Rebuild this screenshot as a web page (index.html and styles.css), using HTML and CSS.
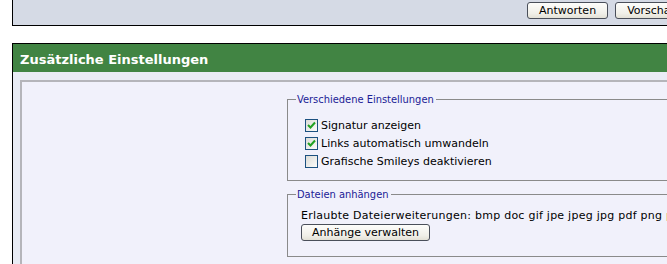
FILE: index.html
```html
<!DOCTYPE html>
<html>
<head>
<meta charset="utf-8">
<link rel="stylesheet" href="styles.css">
</head>
<body>
<div class="page">
  <div class="topbox">
    <button class="btn">Antworten</button>
    <button class="btn">Vorschau</button>
  </div>
  <div class="section">
    <div class="sec-head">Zusätzliche Einstellungen</div>
    <div class="sec-body">
      <div class="inner">
        <div class="left-col"></div>
        <div class="right-col">
          <fieldset class="fs fs1">
            <legend>Verschiedene Einstellungen</legend>
            <label class="cb-row"><span class="cb checked"><svg viewBox="0 0 11 11" width="11" height="11"><path d="M2 5 L4.5 7.5 L9 2.5" fill="none" stroke="#21a121" stroke-width="2"/></svg></span>Signatur anzeigen</label>
            <label class="cb-row"><span class="cb checked"><svg viewBox="0 0 11 11" width="11" height="11"><path d="M2 5 L4.5 7.5 L9 2.5" fill="none" stroke="#21a121" stroke-width="2"/></svg></span>Links automatisch umwandeln</label>
            <label class="cb-row"><span class="cb"></span>Grafische Smileys deaktivieren</label>
          </fieldset>
          <fieldset class="fs fs2">
            <legend>Dateien anhängen</legend>
            <div class="ext">Erlaubte Dateierweiterungen: bmp doc gif jpe jpeg jpg pdf png psd txt zip</div>
            <button class="btn btn-att">Anhänge verwalten</button>
          </fieldset>
        </div>
      </div>
    </div>
  </div>
</div>
</body>
</html>
```
FILE: styles.css
```css
html, body {
  margin: 0;
  padding: 0;
  background: #ffffff;
  overflow: hidden;
}
.page {
  width: 900px;
  padding-left: 12px;
  font-family: "DejaVu Sans", Verdana, sans-serif;
  font-size: 11px;
  color: #000;
}
.topbox {
  background: #d5dae5;
  border-left: 1px solid #000;
  border-bottom: 1px solid #000;
  display: flex;
  align-items: flex-start;
  padding-top: 2px;
  padding-left: 514px;
  gap: 7px;
  box-sizing: content-box;
  height: 23px;
}
.btn {
  font-family: "DejaVu Sans", Verdana, sans-serif;
  font-size: 11px;
  height: 17px;
  padding: 0 11px;
  border: 1px solid #4a4f5a;
  border-radius: 3px;
  background: linear-gradient(#fdfdfb, #f0efe8 70%, #e3e1d6);
  color: #000;
  line-height: 15px;
}
.section {
  margin-top: 17px;
  border-top: 1px solid #000;
  border-left: 1px solid #000;
}
.sec-head {
  height: 28px;
  box-sizing: border-box;
  background: #418443;
  color: #fff;
  font-weight: bold;
  font-size: 13px;
  line-height: 16px;
  padding-top: 8px;
  padding-left: 7px;
}
.sec-body {
  background: #e9ecf5;
  padding: 8px 0 0 7px;
}
.inner {
  border-top: 2px solid #b5b5ba;
  border-left: 2px solid #b5b5ba;
  background: #f1f1fb;
  display: grid;
  grid-template-columns: 265px 1fr;
  padding-top: 11px;
  padding-bottom: 20px;
}
.fs {
  margin: 0;
  border: 1px solid #8a8a8a;
  border-right: none;
  padding: 4px 0 8px 10px;
}
.fs legend {
  font-family: "DejaVu Sans Condensed", "DejaVu Sans", sans-serif;
  font-size: 11px;
  color: #1b2196;
  padding: 0 2px 0 1px;
  margin-left: -2px;
}
.fs1 {
  padding-top: 10px;
  padding-bottom: 10px;
}
.fs2 {
  margin-top: 7px;
  padding-top: 6px;
  padding-bottom: 15px;
}
.cb-row {
  display: flex;
  align-items: center;
  height: 18px;
  gap: 3px;
  margin-left: 7px;
}
.cb {
  width: 11px;
  height: 11px;
  border: 1px solid #1c5180;
  background: linear-gradient(135deg, #dcdcd7, #fbfbf9);
  display: inline-flex;
  align-items: center;
  justify-content: center;
}
.ext {
  margin-left: 3px;
  white-space: nowrap;
  height: 17px;
  line-height: 17px;
  letter-spacing: 0.25px;
}
.btn-att {
  margin-left: 3px;
  padding: 0 10px;
}
```
